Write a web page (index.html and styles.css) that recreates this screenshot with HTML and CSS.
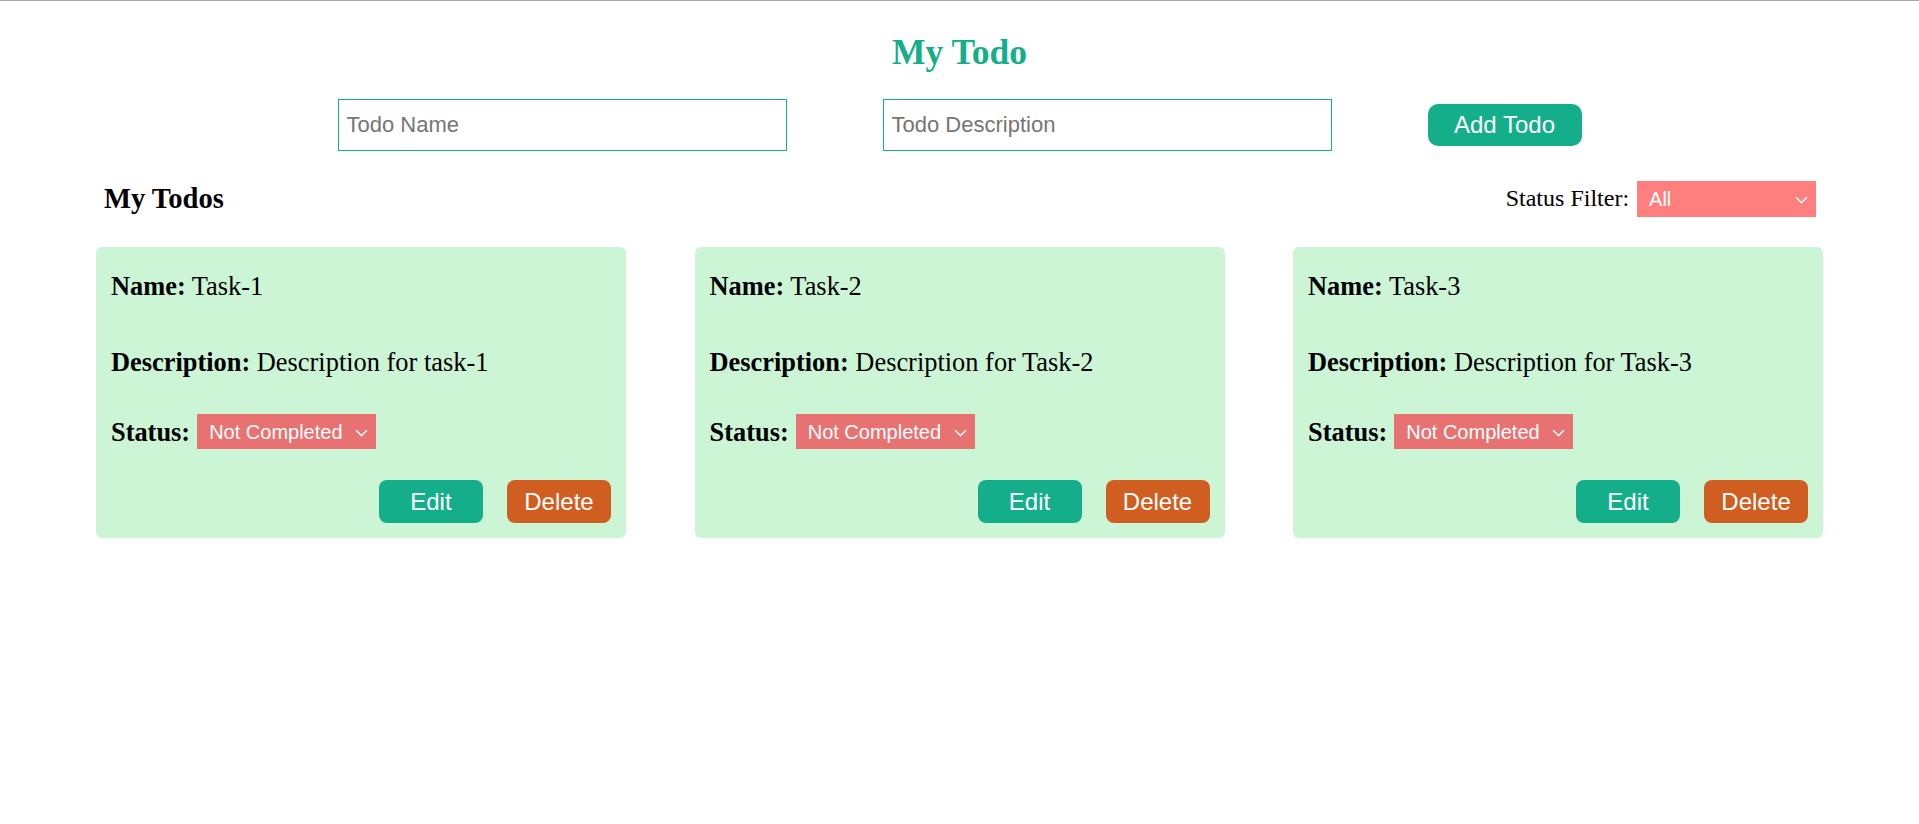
FILE: index.html
```html
<!DOCTYPE html>
<html lang="en">
<head>
<meta charset="utf-8">
<title>My Todo</title>
<link rel="stylesheet" href="styles.css">
</head>
<body>
<main class="app">
  <h1 class="title">My Todo</h1>
  <div class="create-row">
    <input class="field" type="text" placeholder="Todo Name">
    <input class="field" type="text" placeholder="Todo Description">
    <button class="btn btn-teal btn-add">Add Todo</button>
  </div>

  <section class="todos">
    <div class="todos-head">
      <h2 class="todos-title">My Todos</h2>
      <div class="filter">
        <label class="filter-label" for="filter">Status Filter:</label>
        <div class="select-wrap select-filter">
          <select id="filter" class="select">
            <option>All</option>
            <option>Completed</option>
            <option>Not Completed</option>
          </select>
          <svg class="chev" viewBox="0 0 12 7" aria-hidden="true"><path d="M1 1l5 5 5-5"/></svg>
        </div>
      </div>
    </div>

    <div class="cards">
      <article class="card">
        <p class="line"><b>Name:</b> Task-1</p>
        <p class="line desc"><b>Description:</b> Description for task-1</p>
        <div class="status-row">
          <b class="status-label">Status:</b>
          <div class="select-wrap select-status">
            <select class="select"><option>Not Completed</option><option>Completed</option></select>
            <svg class="chev" viewBox="0 0 12 7" aria-hidden="true"><path d="M1 1l5 5 5-5"/></svg>
          </div>
        </div>
        <div class="actions">
          <button class="btn btn-teal btn-card">Edit</button>
          <button class="btn btn-orange btn-card">Delete</button>
        </div>
      </article>

      <article class="card">
        <p class="line"><b>Name:</b> Task-2</p>
        <p class="line desc"><b>Description:</b> Description for Task-2</p>
        <div class="status-row">
          <b class="status-label">Status:</b>
          <div class="select-wrap select-status">
            <select class="select"><option>Not Completed</option><option>Completed</option></select>
            <svg class="chev" viewBox="0 0 12 7" aria-hidden="true"><path d="M1 1l5 5 5-5"/></svg>
          </div>
        </div>
        <div class="actions">
          <button class="btn btn-teal btn-card">Edit</button>
          <button class="btn btn-orange btn-card">Delete</button>
        </div>
      </article>

      <article class="card">
        <p class="line"><b>Name:</b> Task-3</p>
        <p class="line desc"><b>Description:</b> Description for Task-3</p>
        <div class="status-row">
          <b class="status-label">Status:</b>
          <div class="select-wrap select-status">
            <select class="select"><option>Not Completed</option><option>Completed</option></select>
            <svg class="chev" viewBox="0 0 12 7" aria-hidden="true"><path d="M1 1l5 5 5-5"/></svg>
          </div>
        </div>
        <div class="actions">
          <button class="btn btn-teal btn-card">Edit</button>
          <button class="btn btn-orange btn-card">Delete</button>
        </div>
      </article>
    </div>
  </section>
</main>
</body>
</html>
```

FILE: styles.css
```css
* { box-sizing: border-box; }

body {
  margin: 0;
  border-top: 1px solid #a9a9ad;
  background: #ffffff;
  color: #000000;
  font-family: "Liberation Serif", "Times New Roman", serif;
}

.title {
  margin: 31px 0 0;
  text-align: center;
  font-size: 35.5px;
  line-height: 40px;
  font-weight: bold;
  color: #14ae8a;
}

.create-row {
  display: flex;
  justify-content: center;
  align-items: center;
  gap: 96px;
  margin-top: 27px;
}

.field {
  width: 449px;
  height: 52px;
  border: 1px solid #14ae8a;
  padding: 0 8px;
  font-family: "Liberation Sans", Arial, sans-serif;
  font-size: 22px;
  color: #222;
  outline: none;
  background: #fff;
}
.field::placeholder { color: #757575; }

.btn {
  border: none;
  color: #ffffff;
  font-family: "Liberation Sans", Arial, sans-serif;
  font-size: 24px;
  padding: 0;
  cursor: pointer;
}
.btn-teal { background: #14ae8a; }
.btn-orange { background: #d05e20; }

.btn-add {
  width: 154px;
  height: 42px;
  border-radius: 10px;
}

.todos {
  width: 90%;
  margin: 30px auto 0;
}

.todos-head {
  display: flex;
  justify-content: space-between;
  align-items: center;
  height: 36px;
  padding: 0 7px 0 8px;
}

.todos-title {
  margin: 0;
  font-size: 28.6px;
  line-height: 32px;
  font-weight: bold;
}

.filter {
  display: flex;
  align-items: center;
  gap: 8px;
}
.filter-label {
  font-size: 24px;
  line-height: 28px;
  margin-top: -2px;
}

.select-wrap {
  position: relative;
  width: 179px;
  height: 36px;
}
.select {
  appearance: none;
  -webkit-appearance: none;
  width: 100%;
  height: 100%;
  border: none;
  border-radius: 0;
  padding: 0 30px 0 12px;
  color: #ffffff;
  font-family: "Liberation Sans", Arial, sans-serif;
  font-size: 20px;
  outline: none;
}
.select-filter .select { background: #ff7f7f; }
.select-status .select { background: #e87272; }
.select-status { height: 35px; }

.chev {
  position: absolute;
  right: 8px;
  top: 50%;
  width: 13px;
  height: 8px;
  margin-top: -3px;
  fill: none;
  stroke: #ffffff;
  stroke-width: 1.5;
  pointer-events: none;
}

.cards {
  display: flex;
  justify-content: space-between;
  margin-top: 30px;
}

.card {
  width: 530px;
  background: #ccf5d5;
  border-radius: 6px;
  padding: 24px 15px 15px;
  font-size: 26.4px;
}

.line {
  margin: 0;
  line-height: 30px;
}
.line + .line { margin-top: 46px; }

.status-row {
  display: flex;
  align-items: center;
  gap: 7px;
  margin-top: 37px;
}
.status-label { line-height: 30px; }

.actions {
  display: flex;
  justify-content: flex-end;
  gap: 24px;
  margin-top: 31px;
}

.btn-card {
  width: 104px;
  height: 43px;
  border-radius: 8px;
}
```
